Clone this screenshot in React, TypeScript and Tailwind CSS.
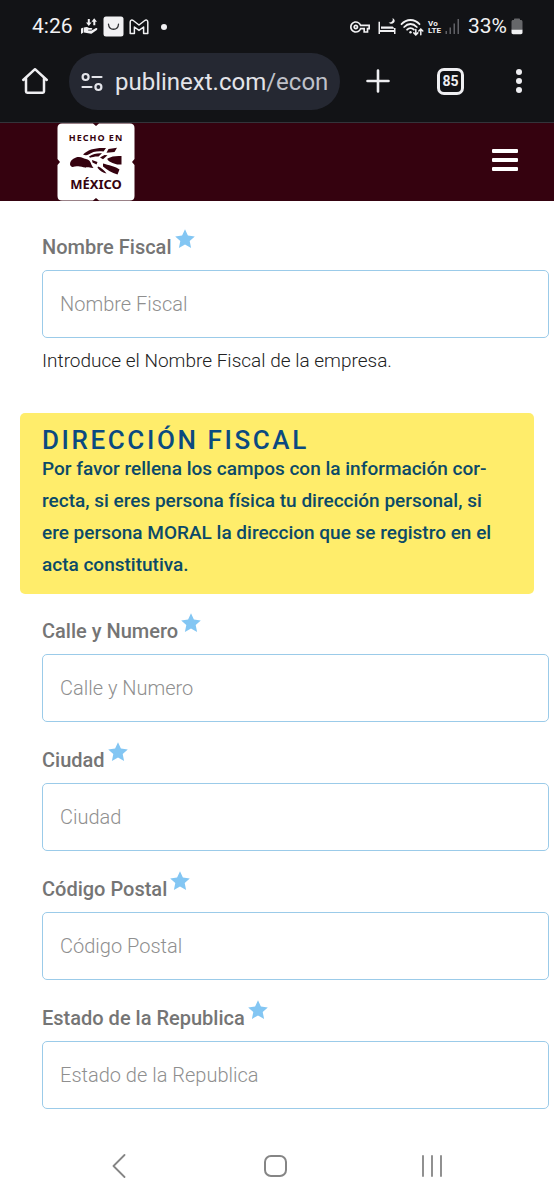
import { useId } from "react";
import { MdOutlineVpnKey } from "react-icons/md";

const addressFields = ["Calle y Numero", "Ciudad", "Código Postal", "Estado de la Republica"];

function StarIcon() {
  return (
    <svg viewBox="0 0 20 20" className="mb-[17px] ml-[3px] size-5 shrink-0 fill-[#83c6f3]" aria-label="obligatorio">
      <path d="M10 0.3l2.900 6.300 6.900.8-5.100 4.600 1.400 6.900-6.100-3.500-6.100 3.500 1.400-6.900L.2 7.400l6.900-.8z" />
    </svg>
  );
}

function HandTransferIcon() {
  return (
    <svg viewBox="0 0 17 17" className="h-[17px] w-[17px]" fill="#f1f1f3">
      <path d="M0 10.500l2.400-1v5L0 16zM3 9.600c2-1.200 3.600-.8 5 .4h2.200c1.600 0 1.500 1.800 0 1.800H7.200v.7h3.400l4-2.300c1.500-.6 2.400.7 1.200 1.700l-4.600 3.300c-.8.6-1.600.7-2.600.4L3 14.400z" />
      <path d="M6.800 1h2v3.500h1.800L7.800 8 5 4.500h1.800zM13.200.2L16 3.700h-1.700v3.500h-2V3.700h-1.800z" />
    </svg>
  );
}

function BagIcon() {
  return (
    <svg viewBox="0 0 21 21" className="size-[21px]">
      <rect x="0.5" y="0.5" width="20" height="20" rx="2.5" fill="#f1f1f3" />
      <path d="M5.500 8.200c.6 6.700 9.400 6.700 10 0" fill="none" stroke="#2d2e31" strokeWidth="1.300" strokeLinecap="round" />
    </svg>
  );
}

function MailIcon() {
  return (
    <svg viewBox="0 0 20 16" className="h-4 w-5" fill="none" stroke="#f1f1f3" strokeWidth="1.500" strokeLinejoin="round">
      <path d="M1.200 14.500V3c0-2 1.800-2.400 3-1.500L10 6l5.800-4.500c1.200-.9 3-.5 3 1.500v11.500h-4.200V8L10 11.400 5.400 8v6.500z" />
    </svg>
  );
}

function BedIcon() {
  return (
    <svg viewBox="0 0 18 17" className="h-[17px] w-[18px]" fill="#f1f1f3">
      <path d="M.5 3.800H2v8.100h14V10h1.500v6H16v-2H2v2H.5zM3 8.400h10.500c1.500 0 2.500.6 2.500 2.400H3z" />
      <path d="M14.400.3c1.200 2.400-.9 4.800-3.700 3.900 1.800 2.700 6 1.500 6-1.400 0-1.200-1-2.200-2.300-2.500z" />
    </svg>
  );
}

function WifiIcon() {
  return (
    <svg viewBox="0 0 24 18" className="h-[18px] w-6" fill="none" stroke="#f1f1f3" strokeWidth="1.800" strokeLinecap="round">
      <path d="M1.500 6.200c5-5.600 13-5.600 18 0M4.200 9c3.700-4 8.900-4 12.600 0M7.100 11.700c2-2.100 4.800-2.100 6.800 0" />
      <circle cx="10.500" cy="14.300" r="1.200" fill="#f1f1f3" stroke="none" />
      <path d="M15.800 11.500v5M13.800 14.900l2 2 2-2M20.800 16.800v-5.600M18.800 13l2-2 2 2" strokeWidth="1.500" />
    </svg>
  );
}

function SignalIcon() {
  return (
    <svg viewBox="0 0 15 17" className="h-[17px] w-[15px]" fill="#606166">
      <rect x="0.500" y="13" width="1.500" height="3" />
      <rect x="4.500" y="9.500" width="1.500" height="6.500" />
      <rect x="8.500" y="5.500" width="1.500" height="10.500" />
      <rect x="12.500" y="1" width="1.500" height="15" />
    </svg>
  );
}

function BatteryIcon() {
  return (
    <svg viewBox="0 0 12 17" className="h-[17px] w-3">
      <path d="M3 2V1.500C3 .8 3.400.5 4 .5h4c.6 0 1 .3 1 1V2h.8c1 0 1.700.7 1.700 1.700V12H.5V3.700C.5 2.700 1.200 2 2.200 2z" fill="#66676a" />
      <path d="M.5 11.700h11v2.900c0 1-.7 1.700-1.700 1.700H2.200c-1 0-1.700-.7-1.700-1.700z" fill="#f1f1f3" />
    </svg>
  );
}

function StatusBar() {
  return (
    <div className="flex h-[53px] items-center pl-8 pr-[31px] text-[#f1f1f3]">
      <span className="text-[21px]">4:26</span>
      <div className="ml-2 flex items-center gap-[5px]">
        <HandTransferIcon />
        <BagIcon />
        <MailIcon />
        <span className="ml-[7px] size-1.5 rounded-full bg-[#f1f1f3]" />
      </div>
      <div className="ml-auto flex items-center gap-1">
        <MdOutlineVpnKey className="mr-1 size-5" />
        <BedIcon />
        <WifiIcon />
        <span className="flex flex-col text-[8px] font-bold leading-[7px]">
          <span>Vo</span>
          <span>LTE</span>
        </span>
        <SignalIcon />
        <span className="ml-1 text-[21px]">33%</span>
        <BatteryIcon />
      </div>
    </div>
  );
}

function BrowserBar() {
  return (
    <div className="flex h-[69px] items-start">
      <button aria-label="Inicio" className="ml-[21px] mt-[14px] shrink-0">
        <svg viewBox="0 0 28 28" className="size-7" fill="none" stroke="#eeeef1" strokeWidth="2.500" strokeLinejoin="round" strokeLinecap="round">
          <path d="M2.200 13L14 2.200 25.800 13M5 11v13.500c0 .8.400 1.200 1.200 1.200h15.600c.8 0 1.200-.4 1.200-1.200V11" />
        </svg>
      </button>
      <div className="ml-5 flex h-[57px] min-w-0 flex-1 items-center overflow-hidden rounded-full bg-[#252832] pl-3 pr-2.5">
        <svg viewBox="0 0 22 20" className="mr-3 h-5 w-[22px] shrink-0" fill="none" stroke="#e3e4e9" strokeWidth="2.200" strokeLinecap="round">
          <circle cx="4.600" cy="5" r="3" />
          <path d="M11.500 5h9M1.500 15h9" />
          <circle cx="17.400" cy="15" r="3" />
        </svg>
        <span className="whitespace-nowrap text-[24px] text-[#e3e4e9]">
          publinext.com<span className="text-[#bfc1c9]">/econ</span>
        </span>
      </div>
      <button aria-label="Nueva pestaña" className="ml-[26px] mt-4 shrink-0">
        <svg viewBox="0 0 24 24" className="size-6" stroke="#eeeef1" strokeWidth="2.600" strokeLinecap="round">
          <path d="M12 1.500v21M1.500 12h21" />
        </svg>
      </button>
      <button
        aria-label="Pestañas abiertas"
        className="ml-[47px] mt-[15px] flex size-[27px] shrink-0 items-center justify-center rounded-[7px] border-[3px] border-[#eeeef1] text-[14px] font-bold text-[#eeeef1]"
      >
        85
      </button>
      <button aria-label="Menú del navegador" className="ml-[52px] mr-8 mt-4 flex h-6 shrink-0 flex-col items-center justify-between">
        <span className="size-1.5 rounded-full bg-[#eeeef1]" />
        <span className="size-1.5 rounded-full bg-[#eeeef1]" />
        <span className="size-1.5 rounded-full bg-[#eeeef1]" />
      </button>
    </div>
  );
}

function HechoEnMexico() {
  return (
    <svg viewBox="0 0 78 78" className="size-[78px]" role="img" aria-label="Hecho en México">
      <path
        d="M5 .5h31l3 2.500 3-2.500h31q4.500 0 4.500 4.500v31L75 39l2.500 3v31q0 4.500-4.500 4.500H42L39 75l-3 2.500H5Q.5 77.500.5 73V42L3 39 .5 36V5Q.5.5 5 .5z"
        fill="#fff"
      />
      <g fill="#35020f">
        <path d="M13 41c0-3 2-5 6-6.500 3-1 5-.3 7 .5 3 1.500 5 .5 7 3.500 1 1.500 1.500 4 3.500 6.500-3-.5-7 0-10-.8-4-1-8-1.500-10-.4-1.500.8-3.500-.8-3.500-2.800z" />
        <path d="M26 31.500c5-5 12-7 23-6.500l-2.500 3.500c-7-.8-11 .5-15 3-1.500 1-3.500 1-5.500 0z" />
        <path d="M51.500 26l8.500-1.200-2.500 4.200-8 .8z" />
        <path d="M32 33.500c4-2.500 8-3.500 13-3.200l-3.500 3.200c-3.500-.2-6 .5-8.500 1.200z" />
        <path d="M43 34.500l4.500-2.500 3 .3-4.500 4z" />
        <path d="M50.500 35.500c4-2.200 8-2.800 14-2.500v8.500c-4 .5-8-.8-11-2.500-2-1.200-3.500-2-3-3.500z" />
        <path d="M46 40.500c5 1.500 13 3 16.500 6l-2 5c-6-1.500-10-4.500-14.500-8z" />
        <path d="M35 37l5.500 2-1 2.500-4-2zM41 43.500c3 1 6.500 4 8.500 7-3.500-.8-7-3-9-5.800z" />
      </g>
      <g fill="#35020f" textAnchor="middle" fontFamily="'Noto Sans', sans-serif" fontWeight="700">
        <text x="39" y="18" fontSize="9" letterSpacing="1">HECHO EN</text>
        <text x="39" y="66" fontSize="13">MÉXICO</text>
      </g>
    </svg>
  );
}

function Field({ label, help }: { label: string; help?: string }) {
  const id = useId();
  return (
    <div className="pl-[42px] pr-[5px]">
      <label htmlFor={id} className="flex h-8 items-center text-[20px] font-medium text-[#757575]">
        {label}
        <StarIcon />
      </label>
      <input
        id={id}
        type="text"
        placeholder={label}
        className="mt-[7px] h-[68px] w-full rounded-[5px] border border-[#9bcbe9] bg-white px-[17px] text-[20px] font-light text-[#444] outline-none placeholder:text-[#8f8f8f]"
      />
      {help && <p className="mt-[7px] text-[19px] font-light leading-8 text-[#222]">{help}</p>}
    </div>
  );
}

export default function App() {
  return (
    <div className="bg-white font-['Roboto',sans-serif]">
      <header className="bg-[#121316]">
        <StatusBar />
        <BrowserBar />
      </header>
      <nav className="flex h-[79px] items-center justify-between border-t border-[#33343a] bg-[#35020f] pl-[57px] pr-9">
        <a href="#">
          <HechoEnMexico />
        </a>
        <button aria-label="Menú" className="mb-1 flex w-[26px] flex-col gap-[5px]">
          <span className="h-1 w-full rounded-[1px] bg-white" />
          <span className="h-1 w-full rounded-[1px] bg-white" />
          <span className="h-1 w-full rounded-[1px] bg-white" />
        </button>
      </nav>
      <main className="pt-[30px]">
        <Field label="Nombre Fiscal" help="Introduce el Nombre Fiscal de la empresa." />
        <section className="mx-5 mb-[21px] mt-9 rounded-[5px] bg-[#ffed6b] px-[22px] pb-[13px] pt-[14px] text-[#0b4a68]">
          <h2 className="text-[26px] font-medium leading-[26px] tracking-widest text-[#0b4a80]">DIRECCIÓN FISCAL</h2>
          <p className="text-[19px] font-medium leading-8">
            Por favor rellena los campos con la información cor-
            <br />
            recta, si eres persona física tu dirección personal, si
            <br />
            ere persona MORAL la direccion que se registro en el
            <br />
            acta constitutiva.
          </p>
        </section>
        <div className="flex flex-col gap-[22px]">
          {addressFields.map((label) => (
            <Field key={label} label={label} />
          ))}
        </div>
      </main>
      <footer className="mt-[23px] flex h-[68px] items-center pl-[41px] pr-11">
        <button aria-label="Atrás" className="flex flex-1 justify-center">
          <svg viewBox="0 0 14 24" className="h-6 w-3.5" fill="none" stroke="#858585" strokeWidth="1.800" strokeLinecap="round" strokeLinejoin="round">
            <path d="M12.500 1L1.500 12l11 11" />
          </svg>
        </button>
        <button aria-label="Inicio del sistema" className="flex flex-1 justify-center">
          <span className="h-[22px] w-[23px] rounded-[7px] border-2 border-[#858585]" />
        </button>
        <button aria-label="Recientes" className="flex flex-1 justify-center">
          <svg viewBox="0 0 22 22" className="size-[22px]" stroke="#858585" strokeWidth="1.800" strokeLinecap="round">
            <path d="M2 1v20M11 1v20M20 1v20" />
          </svg>
        </button>
      </footer>
    </div>
  );
}
